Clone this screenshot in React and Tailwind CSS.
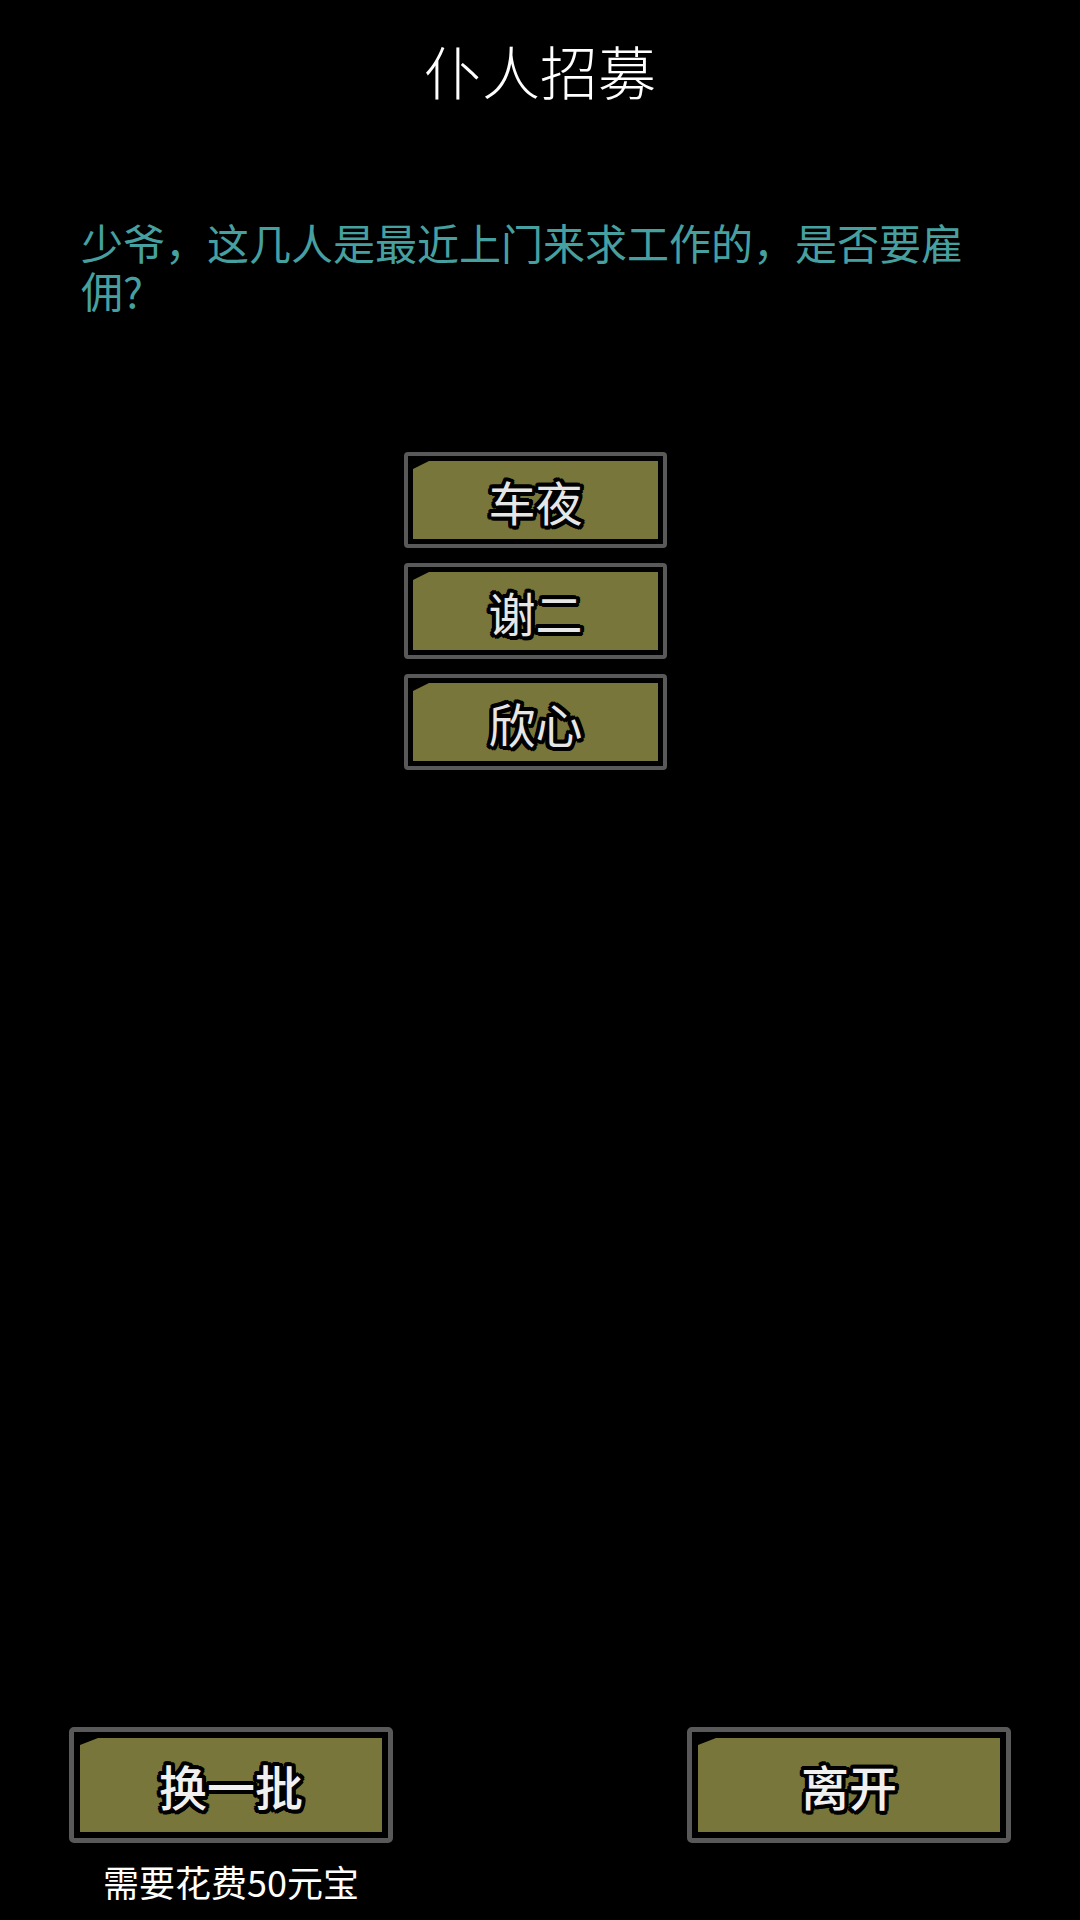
const outline =
  '[text-shadow:-3px_-3px_0_#000,3px_-3px_0_#000,-3px_3px_0_#000,3px_3px_0_#000,0_-4px_0_#000,0_4px_0_#000,-4px_0_0_#000,4px_0_0_#000,-2px_-4px_0_#000,2px_4px_0_#000,-4px_2px_0_#000,4px_-2px_0_#000]'

function OliveButton({ label, big = false }) {
  if (big) {
    return (
      <div className="h-[116px] w-[324px] rounded-[5px] border-[5px] border-[#595959] bg-black p-[6px]">
        <div className="flex h-full w-full items-center justify-center bg-[#78763a] [clip-path:polygon(18px_0,100%_0,100%_100%,0_100%,0_7px)]">
          <span className={`text-[48px] font-medium leading-none text-[#f0f0f0] ${outline}`}>{label}</span>
        </div>
      </div>
    )
  }
  return (
    <div className="h-[96px] w-[263px] rounded-[4px] border-[4px] border-[#595959] bg-black p-[5px]">
      <div className="flex h-full w-full items-center justify-center bg-[#78763a] [clip-path:polygon(16px_0,100%_0,100%_100%,0_100%,0_8px)]">
        <span className={`text-[47px] font-normal leading-none text-[#e6e6e6] ${outline}`}>{label}</span>
      </div>
    </div>
  )
}

export default function App() {
  const servants = ['车夜', '谢二', '欣心']

  return (
    <div className="flex h-[1920px] w-[1080px] flex-col bg-black font-['Noto_Sans_CJK_SC','Noto_Sans',sans-serif]">
      <div className="flex h-[140px] items-center justify-center">
        <h1 className="text-[58px] font-light leading-none text-white">仆人招募</h1>
      </div>

      <p className="mt-[78px] px-[81px] text-[42px] leading-[48px] text-[#47a0a0]">
        少爷，这几人是最近上门来求工作的，是否要雇佣?
      </p>

      <div className="mt-[138px] flex flex-col items-center gap-[15px] pr-[9px]">
        {servants.map((name) => (
          <OliveButton key={name} label={name} />
        ))}
      </div>

      <div className="mt-auto flex justify-between px-[69px] pb-[21px]">
        <div className="flex w-[324px] flex-col items-center">
          <OliveButton big label="换一批" />
          <span className="mt-[20px] text-[36px] leading-none text-white">需要花费50元宝</span>
        </div>
        <div className="flex w-[324px] flex-col items-center">
          <OliveButton big label="离开" />
        </div>
      </div>
    </div>
  )
}
